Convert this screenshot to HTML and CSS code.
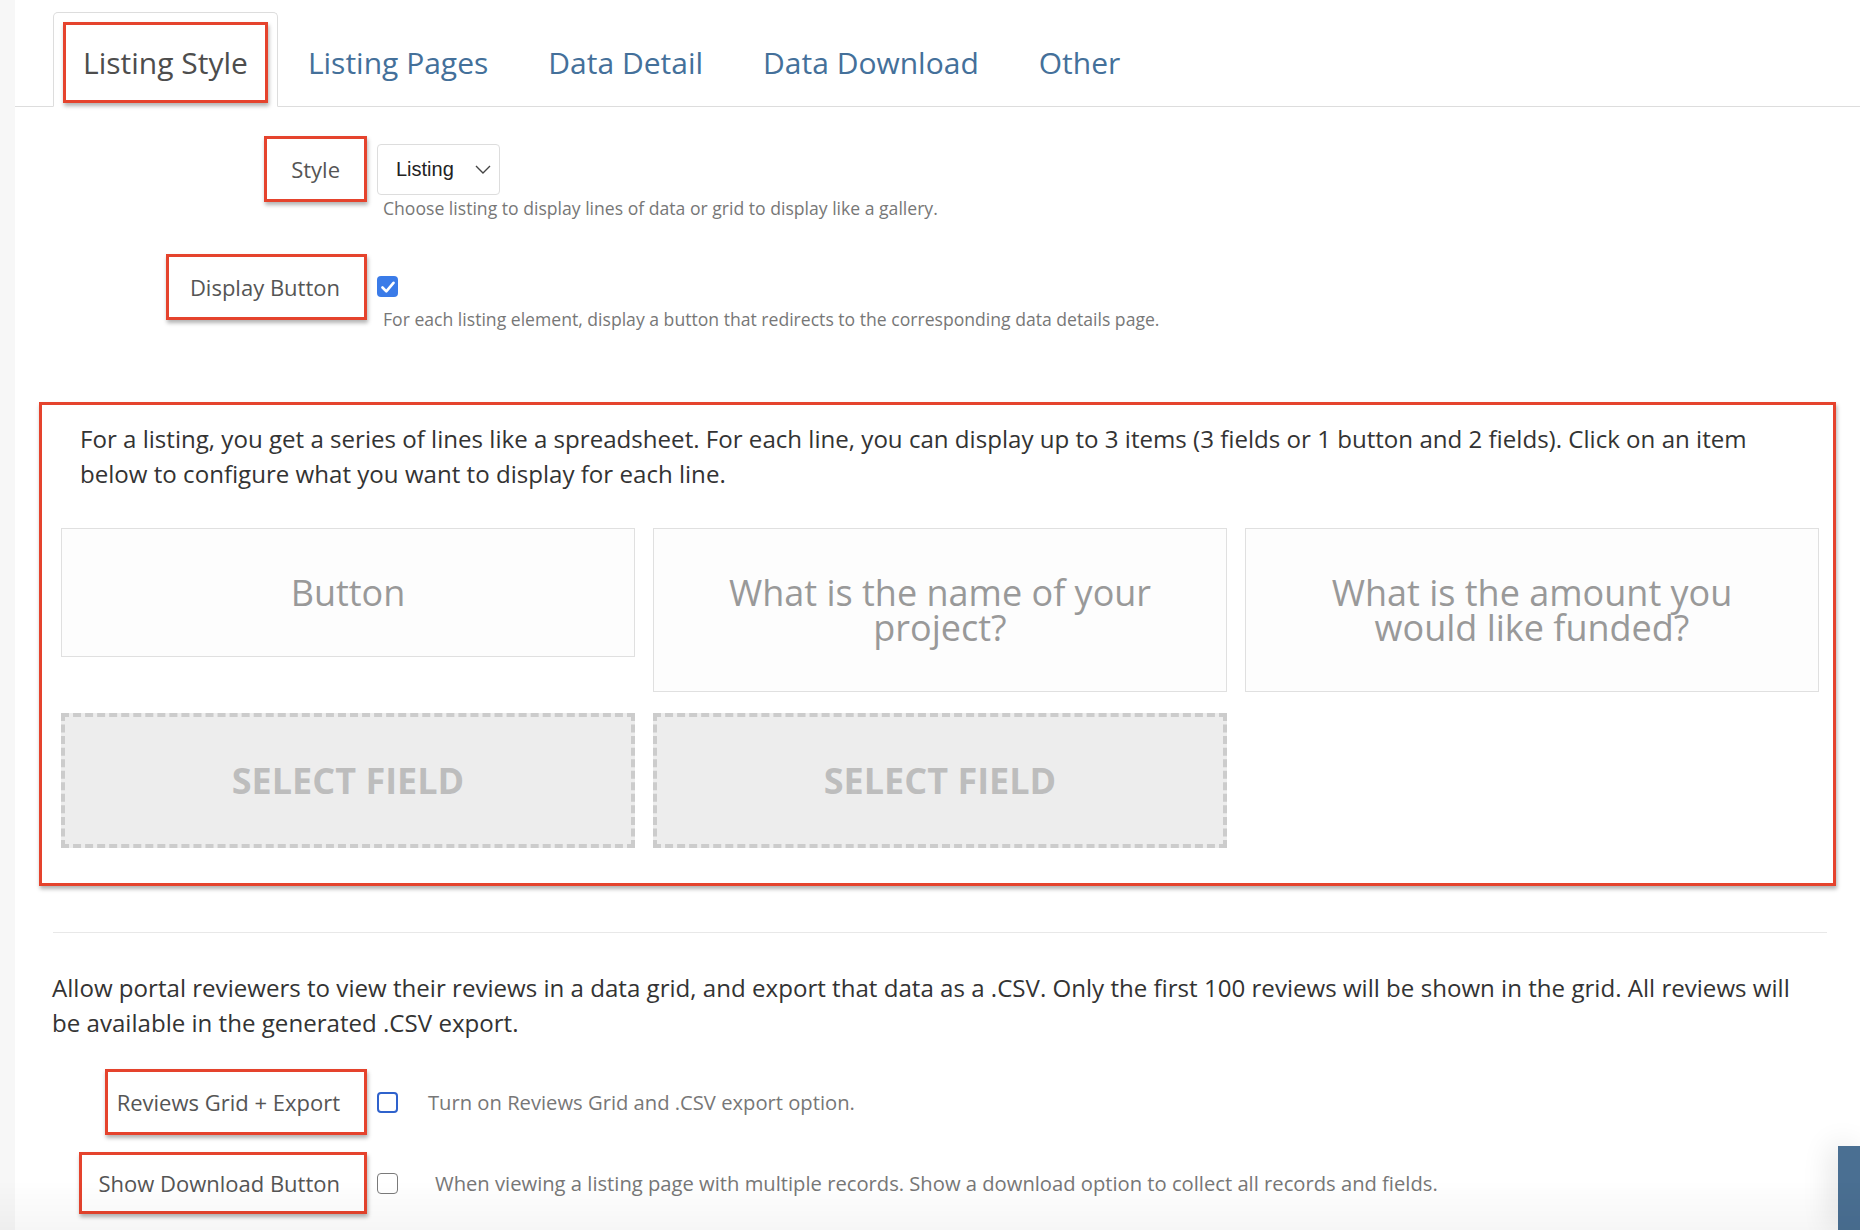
FILE: index.html
```html
<!DOCTYPE html>
<html lang="en">
<head>
  <meta charset="UTF-8">
  <meta name="viewport" content="width=device-width, initial-scale=1.0">
  <title>Listing Style</title>
  <link rel="stylesheet" href="styles.css">
</head>
<body>
  <div class="page">
    <ul class="tabs">
      <li class="tab active"><a href="javascript:;"><span class="mark">Listing Style</span></a></li>
      <li class="tab"><a href="javascript:;"><span>Listing Pages</span></a></li>
      <li class="tab"><a href="javascript:;"><span>Data Detail</span></a></li>
      <li class="tab"><a href="javascript:;"><span>Data Download</span></a></li>
      <li class="tab"><a href="javascript:;"><span>Other</span></a></li>
    </ul>

    <div class="field field-style">
      <div class="field-label"><span class="mark label-box box-style">Style</span></div>
      <div class="field-control">
        <div class="select">
          <span>Listing</span>
          <svg width="16" height="9" viewBox="0 0 16 9"><path d="M1 1l7 7 7-7" fill="none" stroke="#444" stroke-width="1.4"/></svg>
        </div>
        <p class="help">Choose listing to display lines of data or grid to display like a gallery.</p>
      </div>
    </div>

    <div class="field field-button">
      <div class="field-label"><span class="mark label-box box-display">Display Button</span></div>
      <div class="field-control">
        <span class="check checked">
          <svg width="14" height="12" viewBox="0 0 14 12"><path d="M1.5 6.5l3.8 3.8L12.5 1.8" fill="none" stroke="#fff" stroke-width="2.6" stroke-linecap="round" stroke-linejoin="round"/></svg>
        </span>
        <p class="help">For each listing element, display a button that redirects to the corresponding data details page.</p>
      </div>
    </div>

    <div class="listing-box">
      <p class="intro">For a listing, you get a series of lines like a spreadsheet. For each line, you can display up to 3 items (3 fields or 1 button and 2 fields). Click on an item below to configure what you want to display for each line.</p>
      <div class="slots">
        <div class="slot">Button</div>
        <div class="slot">What is the name of your project?</div>
        <div class="slot">What is the amount you would like funded?</div>
        <div class="slot empty">SELECT FIELD</div>
        <div class="slot empty">SELECT FIELD</div>
      </div>
    </div>

    <hr class="divider">

    <p class="reviews-intro">Allow portal reviewers to view their reviews in a data grid, and export that data as a .CSV. Only the first 100 reviews will be shown in the grid. All reviews will be available in the generated .CSV export.</p>

    <div class="inline-field">
      <span class="mark label-box box-reviews">Reviews Grid + Export</span>
      <span class="check focus"></span>
      <span class="inline-help">Turn on Reviews Grid and .CSV export option.</span>
    </div>
    <div class="inline-field field-download">
      <span class="mark label-box box-download">Show Download Button</span>
      <span class="check"></span>
      <span class="inline-help help-download">When viewing a listing page with multiple records. Show a download option to collect all records and fields.</span>
    </div>
  </div>

  <div class="side-tab"></div>
  <div class="bottom-fade"></div>
</body>
</html>
```

FILE: styles.css
```css
*{
  box-sizing: border-box;
}

body{
  margin: 0;
  background-color: #f7f7f7;
  font-family: "Open Sans", "Noto Sans", sans-serif;
  color: #333;
}

a{
  text-decoration: none;
}

ul{
  padding: 0;
  margin: 0;
  list-style: none;
}

.page{
  margin-left: 15px;
  min-height: 100vh;
  padding-bottom: 20px;
  background-color: #fff;
}

/* red annotation frame */
.mark{
  border: 3px solid #e5432d;
  box-shadow: 1px 3px 4px rgba(0, 0, 0, .3);
}

.tabs{
  display: flex;
  padding: 12px 0 0 38px;
  border-bottom: 1px solid #ddd;
}

.tab{
  margin-bottom: -1px;
}

.tab a{
  display: block;
  padding: 9px 9px 3px;
  border: 1px solid transparent;
  border-radius: 5px 5px 0 0;
  color: #44709a;
  font-size: 30px;
  line-height: 35px;
}

.tab span{
  display: block;
  padding: 20px 17px;
  border: 3px solid transparent;
}

.tab.active a{
  border-color: #ddd;
  border-bottom-color: #fff;
  background-color: #fff;
  color: #4d4d4d;
}

.tab.active span{
  border-color: #e5432d;
}

.field{
  display: grid;
  grid-template-columns: 352px 1fr;
  column-gap: 10px;
}

.field-style{
  margin-top: 29px;
}

.field-button{
  margin-top: 33px;
}

.field-label{
  display: flex;
  justify-content: flex-end;
  align-items: flex-start;
}

.label-box{
  display: block;
  padding: 15px 24px 15px 0;
  text-align: right;
  font-size: 22px;
  line-height: 30px;
  color: #555;
  white-space: nowrap;
}

.box-style{ width: 103px; }
.box-display{ width: 201px; }
.box-reviews{ width: 262px; }
.box-download{ width: 288px; padding-top: 13px; padding-bottom: 13px; }

.field-style .field-control{
  padding-top: 8px;
}

.field-button .field-control{
  padding-top: 22px;
}

.select{
  display: flex;
  align-items: center;
  justify-content: space-between;
  width: 123px;
  height: 51px;
  padding: 0 8px 0 18px;
  border: 1px solid #ddd;
  border-radius: 4px;
  font-family: "Liberation Sans", Arial, sans-serif;
  font-size: 20px;
  color: #222;
}

.help{
  margin: 1px 0 0 6px;
  font-size: 17.6px;
  line-height: 25px;
  color: #777;
}

.field-button .help{
  margin-top: 10px;
}

.check{
  display: flex;
  align-items: center;
  justify-content: center;
  width: 21px;
  height: 21px;
  border: 1.5px solid #7a7a7a;
  border-radius: 4px;
  background-color: #fff;
}

.check.checked{
  border: 0;
  background-color: #3a7be8;
}

.check.focus{
  border: 2.5px solid #2f62cc;
}

.listing-box{
  margin: 70px 24px 0;
  padding: 16px 14px 35px 19px;
  border: 3px solid #e5432d;
  box-shadow: 1px 3px 4px rgba(0, 0, 0, .3);
}

.intro{
  margin: 0;
  padding: 0 20px 0 19px;
  font-size: 24.1px;
  line-height: 35px;
  color: #333;
}

.slots{
  display: grid;
  grid-template-columns: repeat(3, 1fr);
  column-gap: 18px;
  row-gap: 21px;
  align-items: start;
  margin-top: 37px;
}

.slot{
  padding: 46px 45px;
  border: 1px solid #e0e0e0;
  background-color: #fdfdfd;
  text-align: center;
  font-size: 36px;
  line-height: 35px;
  color: #999;
}

.slot.empty{
  border: 4px dashed #ccc;
  background-color: #ededed;
  font-weight: 700;
  color: #bdbdbd;
}

.divider{
  margin: 46px 33px 0 38px;
  border: 0;
  border-top: 1px solid #e8e8e8;
}

.reviews-intro{
  margin: 37px 60px 0 37px;
  font-size: 24.1px;
  line-height: 35px;
  color: #333;
}

.inline-field{
  display: grid;
  grid-template-columns: 352px auto 1fr;
  align-items: center;
  margin-top: 29px;
}

.inline-field .label-box{
  justify-self: end;
}

.inline-field .check{
  margin-left: 10px;
}

.field-download{
  margin-top: 17px;
}

.inline-help{
  margin-left: 30px;
  font-size: 20.2px;
  color: #777;
}

.help-download{
  margin-left: 37px;
}

.side-tab{
  position: fixed;
  right: 0;
  bottom: 0;
  width: 22px;
  height: 84px;
  background-color: #4a6f92;
  box-shadow: -6px 0 30px rgba(0, 0, 0, .12);
}

.bottom-fade{
  position: fixed;
  left: 0;
  right: 0;
  bottom: 0;
  height: 50px;
  background: linear-gradient(rgba(0, 0, 0, 0), rgba(0, 0, 0, .035));
  pointer-events: none;
}
```
